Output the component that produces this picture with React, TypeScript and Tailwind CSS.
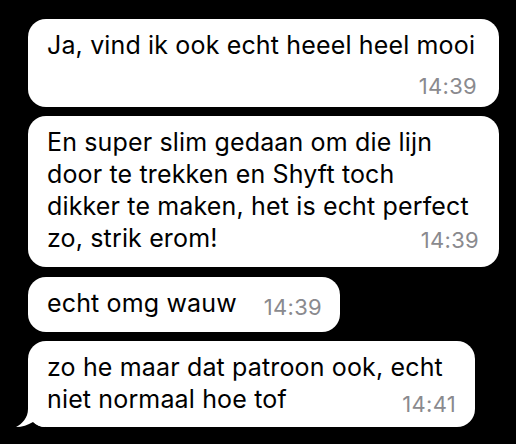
const FONT = "font-['Inter','Noto_Sans',sans-serif]";

function Time({ t, className = "" }: { t: string; className?: string }) {
  return (
    <span className={`text-[22px] leading-[24px] tracking-[0.3px] text-[#8a8a8e] whitespace-nowrap ${className}`}>{t}</span>
  );
}

export default function App() {
  return (
    <div className={`w-[516px] h-[444px] bg-black overflow-hidden pl-[28px] pt-[19px] text-black ${FONT}`}>
      <div className="flex flex-col items-start">
        {/* bubble 1 */}
        <div className="w-[471px] bg-white rounded-[18px] pl-[19px] pr-[22px] pt-[10px] pb-[9px] flex flex-col">
          <p className="text-[25px] leading-[32px] tracking-[0.15px] whitespace-nowrap">Ja, vind ik ook echt heeel heel mooi</p>
          <div className="mt-[13px] flex justify-end">
            <Time t="14:39" />
          </div>
        </div>

        {/* bubble 2 */}
        <div className="mt-[9px] w-[471px] bg-white rounded-[18px] pl-[19px] pr-[20px] pt-[10px] pb-[13px] text-[25px] leading-[32px] tracking-[0.15px]">
          <p className="whitespace-nowrap">En super slim gedaan om die lijn</p>
          <p className="whitespace-nowrap">door te trekken en Shyft toch</p>
          <p className="whitespace-nowrap">dikker te maken, het is echt perfect</p>
          <div className="flex items-baseline justify-between">
            <span className="whitespace-nowrap">zo, strik erom!</span>
            <Time t="14:39" className="translate-y-[1px]" />
          </div>
        </div>

        {/* bubble 3 */}
        <div className="mt-[10px] w-[312px] bg-white rounded-[18px] pl-[19px] pr-[18px] pt-[10px] pb-[13px] text-[25px] leading-[32px] tracking-[0.15px] flex items-baseline justify-between">
          <span className="whitespace-nowrap">echt omg wauw</span>
          <Time t="14:39" className="translate-y-[3px]" />
        </div>

        {/* bubble 4 with tail */}
        <div className="relative mt-[9px] w-[447px] bg-white rounded-[18px] pl-[19px] pr-[19px] pt-[10px] pb-[12px] text-[25px] leading-[32px] tracking-[0.15px]">
          <svg className="absolute left-[-13px] bottom-0" width="30" height="32" viewBox="0 0 30 32">
            <path d="M13 0 L13 14 C13 23 7 29 1 32 C7 32 13 30 18 27 Q23 32 30 32 L30 0 Z" fill="#ffffff" />
          </svg>
          <p className="whitespace-nowrap">zo he maar dat patroon ook, echt</p>
          <div className="flex items-baseline justify-between">
            <span className="whitespace-nowrap">niet normaal hoe tof</span>
            <Time t="14:41" className="translate-y-[4px]" />
          </div>
        </div>
      </div>
    </div>
  );
}
